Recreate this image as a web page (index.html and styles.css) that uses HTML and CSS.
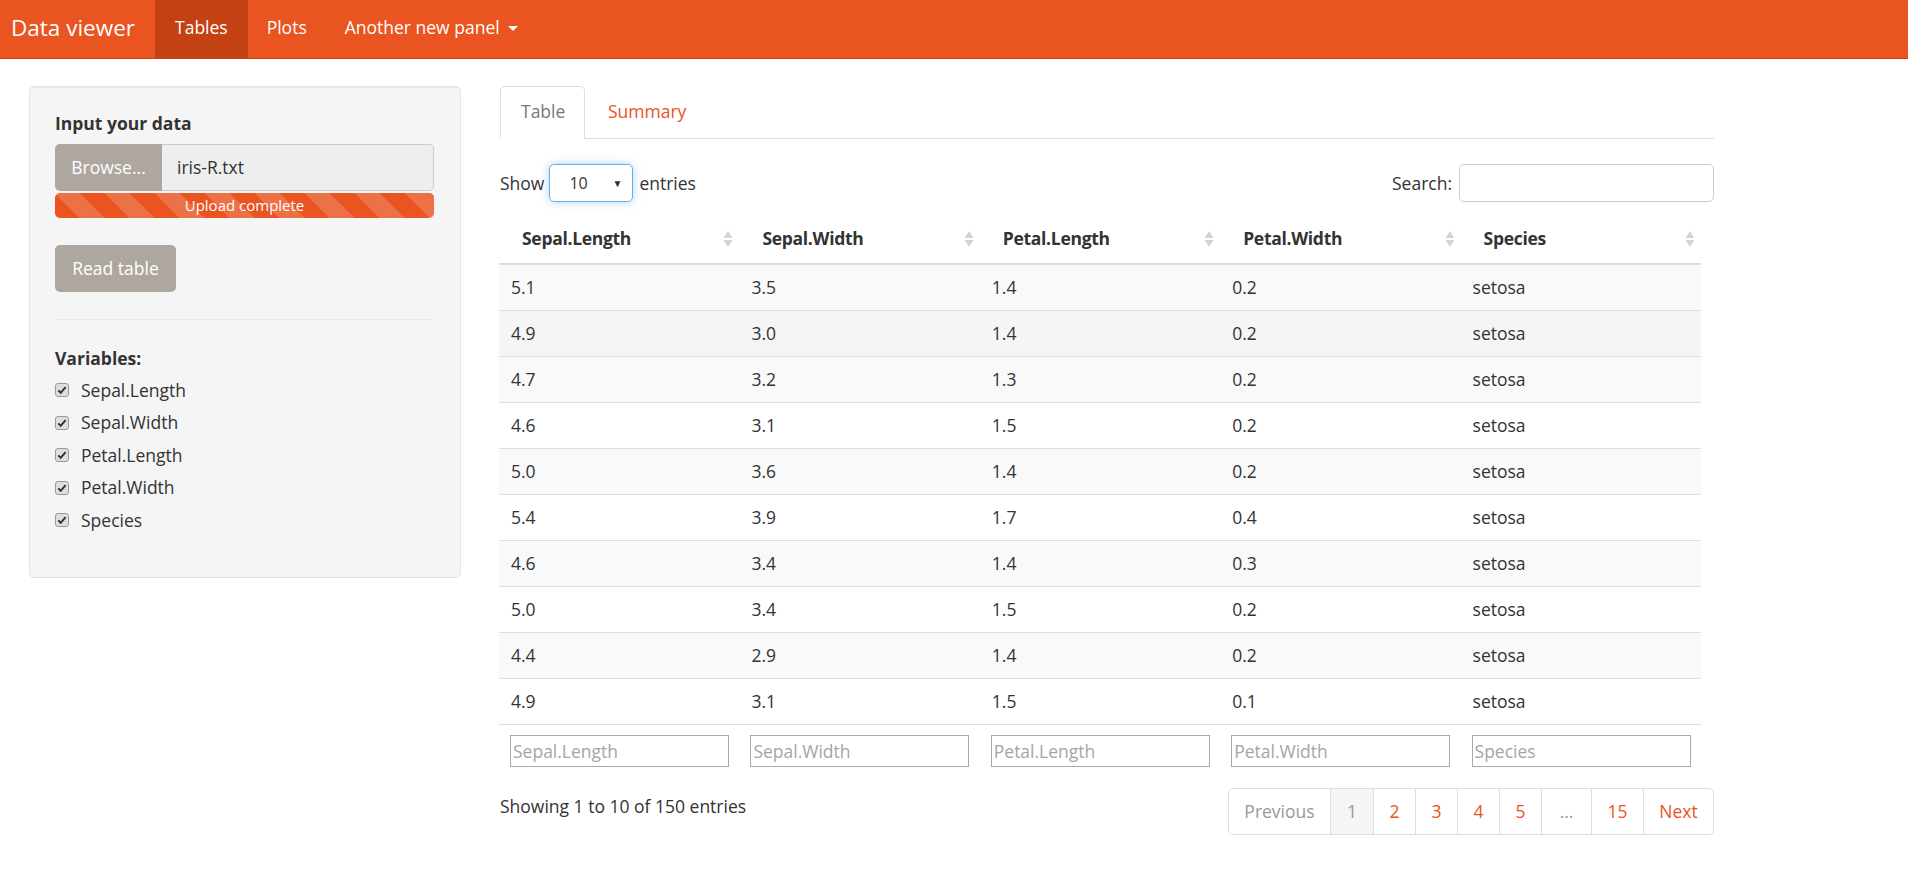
FILE: index.html
```html
<!DOCTYPE html>
<html>
<head>
<meta charset="utf-8">
<title>Data viewer</title>
<link rel="stylesheet" href="styles.css">
</head>
<body>
<nav class="navbar">
  <div class="brand">Data viewer</div>
  <ul class="nav-items">
    <li class="nav-link active nav-tables">Tables</li>
    <li class="nav-link nav-plots">Plots</li>
    <li class="nav-link nav-more">Another new panel <span class="caret"></span></li>
  </ul>
</nav>

<div class="page">
  <aside class="well">
    <div class="field-label">Input your data</div>
    <div class="file-group">
      <div class="btn-browse">Browse...</div>
      <div class="file-name">iris-R.txt</div>
    </div>
    <div class="progress">Upload complete</div>
    <div class="btn-read">Read table</div>
    <div class="divider"></div>
    <div class="field-label vars-label">Variables:</div>
    <ul class="checks">
      <li class="check-row"><svg class="cb" width="14" height="14" viewBox="0 0 14 14"><rect x="0.5" y="0.5" width="13" height="13" rx="2.5" fill="#dedede" stroke="#9a9a9a"/><path d="M3.3 7.4 L5.7 9.8 L10.6 4.2" fill="none" stroke="#333" stroke-width="2"/></svg><span>Sepal.Length</span></li>
      <li class="check-row"><svg class="cb" width="14" height="14" viewBox="0 0 14 14"><rect x="0.5" y="0.5" width="13" height="13" rx="2.5" fill="#dedede" stroke="#9a9a9a"/><path d="M3.3 7.4 L5.7 9.8 L10.6 4.2" fill="none" stroke="#333" stroke-width="2"/></svg><span>Sepal.Width</span></li>
      <li class="check-row"><svg class="cb" width="14" height="14" viewBox="0 0 14 14"><rect x="0.5" y="0.5" width="13" height="13" rx="2.5" fill="#dedede" stroke="#9a9a9a"/><path d="M3.3 7.4 L5.7 9.8 L10.6 4.2" fill="none" stroke="#333" stroke-width="2"/></svg><span>Petal.Length</span></li>
      <li class="check-row"><svg class="cb" width="14" height="14" viewBox="0 0 14 14"><rect x="0.5" y="0.5" width="13" height="13" rx="2.5" fill="#dedede" stroke="#9a9a9a"/><path d="M3.3 7.4 L5.7 9.8 L10.6 4.2" fill="none" stroke="#333" stroke-width="2"/></svg><span>Petal.Width</span></li>
      <li class="check-row"><svg class="cb" width="14" height="14" viewBox="0 0 14 14"><rect x="0.5" y="0.5" width="13" height="13" rx="2.5" fill="#dedede" stroke="#9a9a9a"/><path d="M3.3 7.4 L5.7 9.8 L10.6 4.2" fill="none" stroke="#333" stroke-width="2"/></svg><span>Species</span></li>
    </ul>
  </aside>

  <main class="main">
    <ul class="tabs">
      <li class="tab active">Table</li>
      <li class="tab">Summary</li>
    </ul>

    <div class="dt-top">
      <div class="length">Show <span class="select"><span class="select-val">10</span><span class="select-arrow">&#9660;</span></span> entries</div>
      <div class="search">Search: <span class="search-box"></span></div>
    </div>

    <table class="dt">
      <colgroup><col><col><col><col><col></colgroup>
      <thead>
        <tr>
          <th><div class="th-inner"><span>Sepal.Length</span><svg class="sort" width="10" height="18" viewBox="0 0 10 18"><path d="M5 1 L9.5 8 L0.5 8 Z" fill="#d4d4d4"/><path d="M5 17 L9.5 10 L0.5 10 Z" fill="#d4d4d4"/></svg></div></th>
          <th><div class="th-inner"><span>Sepal.Width</span><svg class="sort" width="10" height="18" viewBox="0 0 10 18"><path d="M5 1 L9.5 8 L0.5 8 Z" fill="#d4d4d4"/><path d="M5 17 L9.5 10 L0.5 10 Z" fill="#d4d4d4"/></svg></div></th>
          <th><div class="th-inner"><span>Petal.Length</span><svg class="sort" width="10" height="18" viewBox="0 0 10 18"><path d="M5 1 L9.5 8 L0.5 8 Z" fill="#d4d4d4"/><path d="M5 17 L9.5 10 L0.5 10 Z" fill="#d4d4d4"/></svg></div></th>
          <th><div class="th-inner"><span>Petal.Width</span><svg class="sort" width="10" height="18" viewBox="0 0 10 18"><path d="M5 1 L9.5 8 L0.5 8 Z" fill="#d4d4d4"/><path d="M5 17 L9.5 10 L0.5 10 Z" fill="#d4d4d4"/></svg></div></th>
          <th><div class="th-inner"><span>Species</span><svg class="sort" width="10" height="18" viewBox="0 0 10 18"><path d="M5 1 L9.5 8 L0.5 8 Z" fill="#d4d4d4"/><path d="M5 17 L9.5 10 L0.5 10 Z" fill="#d4d4d4"/></svg></div></th>
        </tr>
      </thead>
      <tbody>
        <tr class="odd"><td>5.1</td><td>3.5</td><td>1.4</td><td>0.2</td><td>setosa</td></tr>
        <tr class="hover"><td>4.9</td><td>3.0</td><td>1.4</td><td>0.2</td><td>setosa</td></tr>
        <tr class="odd"><td>4.7</td><td>3.2</td><td>1.3</td><td>0.2</td><td>setosa</td></tr>
        <tr><td>4.6</td><td>3.1</td><td>1.5</td><td>0.2</td><td>setosa</td></tr>
        <tr class="odd"><td>5.0</td><td>3.6</td><td>1.4</td><td>0.2</td><td>setosa</td></tr>
        <tr><td>5.4</td><td>3.9</td><td>1.7</td><td>0.4</td><td>setosa</td></tr>
        <tr class="odd"><td>4.6</td><td>3.4</td><td>1.4</td><td>0.3</td><td>setosa</td></tr>
        <tr><td>5.0</td><td>3.4</td><td>1.5</td><td>0.2</td><td>setosa</td></tr>
        <tr class="odd"><td>4.4</td><td>2.9</td><td>1.4</td><td>0.2</td><td>setosa</td></tr>
        <tr><td>4.9</td><td>3.1</td><td>1.5</td><td>0.1</td><td>setosa</td></tr>
      </tbody>
      <tfoot>
        <tr>
          <td><input class="filter" type="text" placeholder="Sepal.Length"></td>
          <td><input class="filter" type="text" placeholder="Sepal.Width"></td>
          <td><input class="filter" type="text" placeholder="Petal.Length"></td>
          <td><input class="filter" type="text" placeholder="Petal.Width"></td>
          <td><input class="filter" type="text" placeholder="Species"></td>
        </tr>
      </tfoot>
    </table>

    <div class="dt-bottom">
      <div class="info">Showing 1 to 10 of 150 entries</div>
      <ul class="pager">
        <li class="pg pg-prev disabled">Previous</li>
        <li class="pg pg-first current">1</li>
        <li class="pg pg-num">2</li>
        <li class="pg pg-num">3</li>
        <li class="pg pg-num">4</li>
        <li class="pg pg-num">5</li>
        <li class="pg pg-ell disabled">…</li>
        <li class="pg pg-wide">15</li>
        <li class="pg pg-next">Next</li>
      </ul>
    </div>
  </main>
</div>
</body>
</html>
```

FILE: styles.css
```css
* { box-sizing: border-box; }
html, body { margin: 0; padding: 0; }
body {
  font-family: "Open Sans", "Noto Sans", sans-serif;
  font-size: 17.5px;
  line-height: 25px;
  color: #333;
  background: #fff;
}
ul { list-style: none; margin: 0; padding: 0; }

/* Navbar */
.navbar {
  height: 59px;
  background: #e95420;
  border-bottom: 1px solid #c34113;
  display: flex;
  align-items: stretch;
  color: #fff;
}
.brand {
  font-size: 22.5px;
  padding: 0 20px 4px 11px;
  display: flex;
  align-items: center;
}
.nav-items { display: flex; align-items: stretch; }
.nav-link {
  display: flex;
  align-items: center;
  padding: 0 19px 4px;
}
.nav-tables { padding: 0 20px 4px; }
.nav-link.active { background: #c34113; }
.caret {
  display: inline-block;
  width: 0; height: 0;
  margin-left: 8px;
  margin-top: 3px;
  border-top: 5px solid #fff;
  border-left: 5px solid transparent;
  border-right: 5px solid transparent;
}

/* Layout */
.page {
  display: flex;
  align-items: flex-start;
  padding-top: 27px;
}
.well {
  margin-left: 29px;
  width: 432px;
  height: 492px;
  background: #f5f5f5;
  border: 1px solid #e3e3e3;
  border-radius: 5px;
  box-shadow: inset 0 1px 1px rgba(0,0,0,.05);
  padding: 24px 26px 0 25px;
}
.field-label { font-weight: 700; margin-bottom: 8px; }
.file-group { display: flex; height: 47px; }
.btn-browse {
  width: 107px;
  background: #aea79f;
  color: #fff;
  border-radius: 5px 0 0 5px;
  display: flex; align-items: center; justify-content: center;
}
.file-name {
  flex: 1;
  background: #eee;
  border: 1px solid #ccc;
  border-left: none;
  border-radius: 0 5px 5px 0;
  display: flex; align-items: center;
  padding-left: 15px;
}
.progress {
  margin-top: 2px;
  height: 25px;
  border-radius: 5px;
  background-color: #e95420;
  background-image: linear-gradient(45deg, rgba(255,255,255,.17) 25%, transparent 25%, transparent 50%, rgba(255,255,255,.17) 50%, rgba(255,255,255,.17) 75%, transparent 75%, transparent);
  background-size: 50px 50px;
  color: #fff;
  font-size: 15px;
  line-height: 25px;
  text-align: center;
}
.btn-read {
  margin-top: 27px;
  width: 121px;
  height: 47px;
  background: #aea79f;
  color: #fff;
  border-radius: 5px;
  display: flex; align-items: center; justify-content: center;
}
.divider {
  margin-top: 27px;
  border-top: 1px solid #e8e8e8;
}
.vars-label { margin-top: 26px; margin-bottom: 3px; }
.check-row {
  height: 32.5px;
  display: flex;
  align-items: center;
}
.cb { flex: none; margin-right: 12px; }

/* Main */
.main {
  margin-left: 38px;
  width: 1215px;
}
.tabs {
  display: flex;
  margin-left: 1px;
  border-bottom: 1px solid #ddd;
}
.tab {
  height: 53px;
  padding: 0 20px 3px;
  display: flex; align-items: center;
  color: #e95420;
  border: 1px solid transparent;
  margin-right: 2px;
  margin-bottom: -1px;
}
.tab.active {
  color: #777;
  background: #fff;
  border-color: #ddd;
  border-bottom-color: #fff;
  border-radius: 5px 5px 0 0;
  width: 85px;
}
.dt-top {
  margin-top: 25px;
  display: flex;
  justify-content: space-between;
  align-items: center;
  height: 38px;
}
.length { display: flex; align-items: center; padding-left: 1px; }
.select {
  display: inline-flex;
  align-items: center;
  justify-content: space-between;
  width: 84px;
  height: 38px;
  margin: 0 6px 0 5px;
  border: 1px solid #66afe9;
  border-radius: 5px;
  box-shadow: 0 0 8px rgba(102,175,233,.55);
  padding: 0 10px 0 19px;
  font-size: 16px;
}
.select-arrow { font-size: 10px; color: #333; }
.search { display: flex; align-items: center; }
.search-box {
  display: inline-block;
  width: 255px;
  height: 38px;
  margin-left: 7px;
  border: 1px solid #ccc;
  border-radius: 5px;
}

/* Table */
.dt {
  margin-top: 11px;
  width: 1202px;
  table-layout: fixed;
  border-collapse: collapse;
}
.dt col { width: 20%; }
.dt th {
  text-align: left;
  font-weight: 700;
  letter-spacing: -0.3px;
  padding: 13px 6px 12px 23px;
  border-bottom: 2px solid #ddd;
}
.th-inner { display: flex; justify-content: space-between; align-items: center; }
.sort { flex: none; }
.dt td {
  padding: 10px 12px;
  border-bottom: 1px solid #ddd;
}
.dt tbody tr.odd { background: #f9f9f9; }
.dt tbody tr.hover { background: #f5f5f5; }
.dt tfoot td {
  border-bottom: none;
  padding: 10px 10px 8px 11px;
}
.filter {
  display: block;
  width: 219px;
  height: 32px;
  border: 1px solid #a9a9a9;
  padding: 0 2px;
  font-family: "Open Sans", "Noto Sans", sans-serif;
  font-size: 17.5px;
  color: #333;
  background: #fff;
  outline: none;
}
.filter::placeholder { color: #a5a5a5; }

/* Bottom */
.dt-bottom {
  margin-top: 13px;
  display: flex;
  justify-content: space-between;
  align-items: flex-start;
}
.info { padding-top: 6px; padding-left: 1px; }
.pager {
  display: flex;
  height: 47px;
  border: 1px solid #ddd;
  border-radius: 5px;
  overflow: hidden;
}
.pg {
  display: flex;
  align-items: center;
  justify-content: center;
  color: #e95420;
  border-left: 1px solid #ddd;
  padding-bottom: 1px;
}
.pg-prev { border-left: none; width: 101px; }
.pg-first { width: 43px; }
.pg-num { width: 42px; }
.pg-ell { width: 50px; }
.pg-wide { width: 52px; }
.pg-next { width: 70px; }
.pg.disabled { color: #999; }
.pg.current { color: #999; background: #f5f5f5; }
```
